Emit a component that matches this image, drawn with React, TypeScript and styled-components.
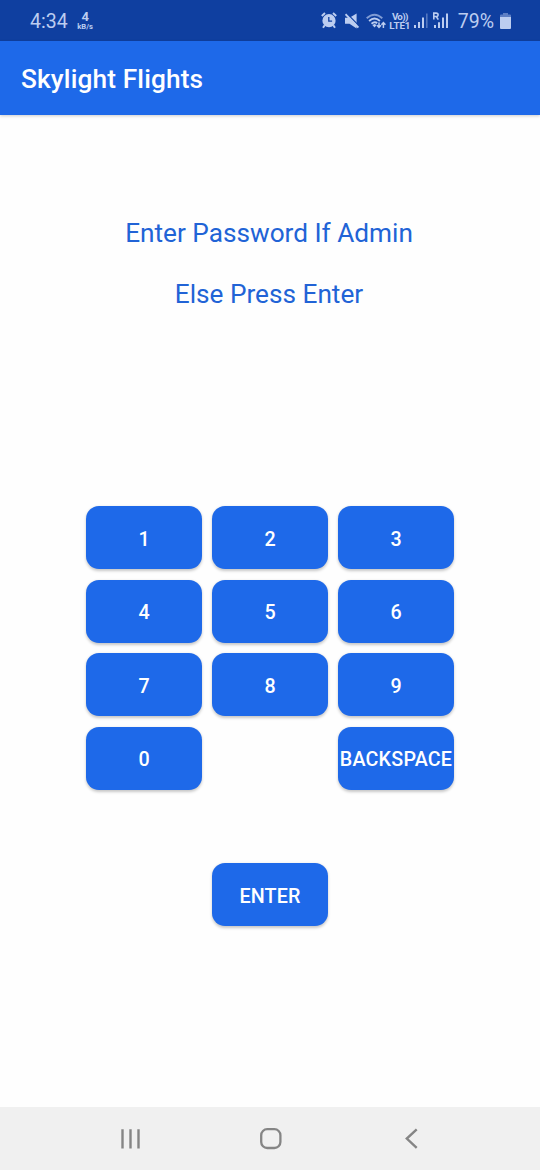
import React from 'react';
import styled, { createGlobalStyle } from 'styled-components';

const GlobalStyle = createGlobalStyle`
  * { box-sizing: border-box; }
  body { margin: 0; background: #fefefe; font-family: Roboto, sans-serif; }
`;

const BLUE = '#1e69e9';
const STATUS_INK = '#bccdf0';

const Screen = styled.div`
  display: flex;
  flex-direction: column;
  width: 540px;
  height: 1170px;
  overflow: hidden;
  background: #fefefe;
`;

const StatusBar = styled.header`
  display: flex;
  justify-content: space-between;
  flex: none;
  height: 41px;
  padding: 0 29px 0 30px;
  background: #0f3fa0;
  color: ${STATUS_INK};
`;

const StatusGroup = styled.div`
  display: flex;
  align-items: center;
`;

const StatusText = styled.span`
  font-size: 19.5px;
  line-height: 24px;
  padding-top: 2px;
  white-space: nowrap;
`;

const BatteryText = styled(StatusText)`
  margin: 1px 0 0 10px;
`;

const NetSpeed = styled.div`
  display: flex;
  flex-direction: column;
  align-items: center;
  width: 17px;
  margin: 0 0 0 9px;
  font-weight: 700;
  white-space: nowrap;
`;

const SpeedValue = styled.span`
  font-size: 13px;
  line-height: 11px;
`;

const SpeedUnit = styled.span`
  font-size: 7.6px;
  line-height: 9px;
`;

const StatusIcon = styled.svg<{ $gap: number }>`
  display: block;
  flex: none;
  margin-left: ${({ $gap }) => $gap}px;
`;

const LteBadge = styled.div`
  display: flex;
  flex-direction: column;
  align-items: center;
  width: 20px;
  margin: 0 4px;
  font-weight: 700;
  white-space: nowrap;
`;

const LteLine = styled.span<{ $spacing?: number }>`
  font-size: 9.8px;
  line-height: 9px;
  letter-spacing: ${({ $spacing = 0 }) => $spacing}px;
`;

const AppBar = styled.div`
  position: relative;
  display: flex;
  align-items: center;
  flex: none;
  height: 74px;
  padding: 2px 21px 0;
  background: ${BLUE};
  box-shadow: 0 1px 3px rgba(0, 0, 0, 0.2);
`;

const Title = styled.h1`
  margin: 0;
  color: #fff;
  font-size: 26.25px;
  font-weight: 500;
  line-height: 32px;
  letter-spacing: 0.13px;
`;

const Main = styled.main`
  display: flex;
  flex-direction: column;
  align-items: center;
  flex: 1;
`;

const Prompt = styled.p`
  margin: 88px 2px 0 0;
  color: #2163d6;
  font-size: 26.2px;
  line-height: 61px;
  text-align: center;
  white-space: pre-line;
`;

const Keypad = styled.div`
  display: grid;
  grid-template-columns: repeat(3, 115.5px);
  grid-auto-rows: 63px;
  gap: 10.5px;
  margin-top: 181px;
`;

const Key = styled.button<{ $column?: number; $spacing?: number }>`
  display: flex;
  align-items: center;
  justify-content: center;
  width: 115.5px;
  height: 63px;
  padding: 4px 0 0;
  border: 0;
  border-radius: 13px;
  grid-column: ${({ $column }) => $column ?? 'auto'};
  background: ${BLUE};
  color: #fff;
  box-shadow: 0 1.5px 3px rgba(0, 0, 0, 0.22);
  font: 500 19.7px/24px Roboto, sans-serif;
  letter-spacing: ${({ $spacing = 0 }) => $spacing}px;
  white-space: nowrap;
`;

const Submit = styled(Key)`
  margin-top: 73.5px;
`;

const NavBar = styled.nav`
  display: flex;
  align-items: center;
  justify-content: space-between;
  flex: none;
  height: 63px;
  padding: 0 118px;
  background: #f0f0f0;
`;

const NavIcon = styled.svg`
  display: block;
  fill: none;
  stroke: #858585;
`;

const KEYS = ['1', '2', '3', '4', '5', '6', '7', '8', '9', '0'];

export default function App() {
  return (
    <Screen>
      <GlobalStyle />
      <StatusBar>
        <StatusGroup>
          <StatusText>4:34</StatusText>
          <NetSpeed>
            <SpeedValue>4</SpeedValue>
            <SpeedUnit>kB/s</SpeedUnit>
          </NetSpeed>
        </StatusGroup>
        <StatusGroup>
          <StatusIcon $gap={0} width="16" height="17" viewBox="0 0 16 17">
            <circle cx="8" cy="8.7" r="6.6" fill={STATUS_INK} />
            <path d="M.8 4 4 1.1M15.2 4 12 1.1M3.7 13.3 2 15.8M12.3 13.3 14 15.8" stroke={STATUS_INK} strokeWidth="2" />
            <path d="M7.8 5v4.2h3.3" fill="none" stroke="#0f3fa0" strokeWidth="1.3" />
          </StatusIcon>
          <StatusIcon $gap={8} width="14" height="16" viewBox="0 0 14 16">
            <path d="M0 4.8h4.5L11.6.4v15l-7.1-4.6H0z" fill={STATUS_INK} />
            <path d="M1.9.5 14 12.8" stroke="#0f3fa0" strokeWidth="1.2" />
            <path d="M.5 1.2 13.4 14.6" stroke={STATUS_INK} strokeWidth="1.9" />
          </StatusIcon>
          <StatusIcon $gap={7} width="20" height="16" viewBox="0 0 20 16">
            <g fill="none" stroke={STATUS_INK} strokeWidth="1.9">
              <path d="M.7 5.2Q8.5-1.9 16.3 5.2" opacity=".65" />
              <path d="M3.1 8Q8.5 3.2 13.9 8" />
              <path d="M5.5 10.7Q8.5 8.2 11.2 10.1" />
            </g>
            <path d="M6.3 12 8.5 10.9l2.2 1.1-2.2 2.5z" fill={STATUS_INK} />
            <path d="M13 9.4v5M11 12.3l2 2.2 2-2.2M17.4 15v-5.2M15.4 11.7l2-2.2 2 2.2" fill="none" stroke={STATUS_INK} strokeWidth="1.5" />
          </StatusIcon>
          <LteBadge>
            <LteLine $spacing={-0.7}>Vo))</LteLine>
            <LteLine $spacing={-0.1}>LTE1</LteLine>
          </LteBadge>
          <StatusIcon $gap={0} width="14" height="15" viewBox="0 0 14 15">
            <path d="M0 12h2v3H0zM4 9h2v6H4zM8 4.5h2V15H8z" fill={STATUS_INK} />
            <path d="M12 .5h1.6V15H12z" fill={STATUS_INK} opacity=".4" />
          </StatusIcon>
          <StatusIcon $gap={5} width="15" height="17" viewBox="0 0 15 17">
            <path d="M1 13h2v3H1zM5 10.2h2V16H5zM9 5.5h2V16H9zM13 1.5h2V16h-2z" fill={STATUS_INK} />
            <path d="M.8 7.6V1.1h2.3q2 0 2 1.7t-2 1.7H.8M3.3 4.5l2 3.1" fill="none" stroke={STATUS_INK} strokeWidth="1.6" />
          </StatusIcon>
          <BatteryText>79%</BatteryText>
          <StatusIcon $gap={6} width="11" height="16" viewBox="0 0 11 16">
            <path d="M3 0h5v1.5h2q1 0 1 1v2H0v-2q0-1 1-1h2z" fill={STATUS_INK} opacity=".45" />
            <path d="M0 4h11v11q0 1-1 1H1q-1 0-1-1z" fill={STATUS_INK} />
          </StatusIcon>
        </StatusGroup>
      </StatusBar>
      <AppBar>
        <Title>Skylight Flights</Title>
      </AppBar>
      <Main>
        <Prompt>{'Enter Password If Admin\nElse Press Enter'}</Prompt>
        <Keypad>
          {KEYS.map((label) => (
            <Key key={label}>{label}</Key>
          ))}
          <Key $column={3} $spacing={0.2}>BACKSPACE</Key>
        </Keypad>
        <Submit $spacing={0.1}>ENTER</Submit>
      </Main>
      <NavBar>
        <NavIcon width="24" height="24" viewBox="0 0 24 24" strokeWidth="2.4">
          <path d="M4.5 2.3v19.2M12.5 2.3v19.2M20.5 2.3v19.2" />
        </NavIcon>
        <NavIcon width="24" height="24" viewBox="0 0 24 24" strokeWidth="2.3">
          <rect x="3.2" y="2.2" width="19.2" height="18.8" rx="6" />
        </NavIcon>
        <NavIcon width="24" height="24" viewBox="0 0 24 24" strokeWidth="2.4">
          <path d="m18.7 2.3-9.9 9.2 9.9 9.3" />
        </NavIcon>
      </NavBar>
    </Screen>
  );
}
